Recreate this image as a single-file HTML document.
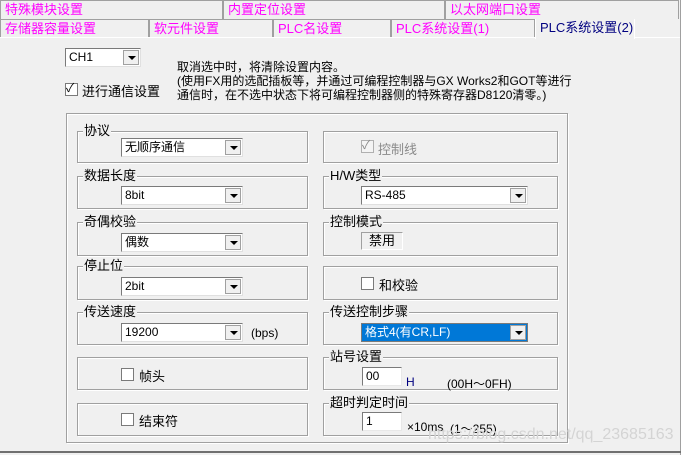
<!DOCTYPE html>
<html><head><meta charset="utf-8"><style>
*{margin:0;padding:0;box-sizing:border-box}
body{width:681px;height:455px;background:#f0f0f0;position:relative;overflow:hidden;font-family:"Liberation Sans","Noto Sans CJK SC",sans-serif;font-size:12px;color:#000}
.a{position:absolute;white-space:nowrap}
.tab{position:absolute;border:1px solid #a0a0a0;border-bottom:none;background:#f0f0f0;color:#ff00ff;font-size:13px;line-height:18px;padding-left:4px}
.g{position:absolute;border:1px solid #a0a0a0;box-shadow:inset 1px 1px 0 #fff,1px 1px 0 #fff}
.gt{position:absolute;top:-9px;left:5px;background:#f0f0f0;padding:0 1px;font-size:13px;line-height:16px}
.cb{position:absolute;height:19px;background:#fff;border:1px solid #7a7a7a;border-right-color:#e0e0e0;border-bottom-color:#e0e0e0;font-size:12px;line-height:17px;padding-left:3px}
.cb .btn{position:absolute;right:1px;top:1px;width:16px;height:15px;background:#f0f0f0;border:1px solid #a0a0a0}
.cb .btn:after{content:"";position:absolute;left:4px;top:5px;border-left:4px solid transparent;border-right:4px solid transparent;border-top:4px solid #000}
.chk{position:absolute;width:13px;height:13px;background:#fff;border:1px solid #7a7a7a}
.ed{position:absolute;background:#fff;border:1px solid #7a7a7a;border-right-color:#e8e8e8;border-bottom-color:#e8e8e8;padding-left:3px;line-height:16px}
</style></head><body>
<div class="tab" style="left:0;top:0;width:223px;height:19px">特殊模块设置</div>
<div class="tab" style="left:223px;top:0;width:222px;height:19px">内置定位设置</div>
<div class="tab" style="left:445px;top:0;width:234px;height:19px">以太网端口设置</div>
<div class="tab" style="left:0;top:19px;width:149px;height:19px">存储器容量设置</div>
<div class="tab" style="left:149px;top:19px;width:124px;height:19px">软元件设置</div>
<div class="tab" style="left:273px;top:19px;width:118px;height:19px">PLC名设置</div>
<div class="tab" style="left:391px;top:19px;width:144px;height:19px">PLC系统设置(1)</div>
<div class="tab" style="left:535px;top:19px;width:100px;height:20px;color:#000080;border-color:#fff;border-top:none">PLC系统设置(2)</div>
<div class="a" style="left:0;top:37px;width:535px;height:1px;background:#fff"></div>
<div class="a" style="left:635px;top:37px;width:45px;height:1px;background:#fff"></div>
<div class="a" style="left:680px;top:0;width:1px;height:455px;background:#a0a0a0"></div>
<div class="a" style="left:0;top:451px;width:681px;height:2px;background:#707070"></div>

<div class="cb" style="left:65px;top:48px;width:76px;height:19px">CH1<div class="btn"></div></div>
<div class="a" style="left:177px;top:60px;line-height:14px">取消选中时，将清除设置内容。<br>(使用FX用的选配插板等，并通过可编程控制器与GX Works2和GOT等进行<br>通信时，在不选中状态下将可编程控制器侧的特殊寄存器D8120清零。)</div>
<div class="chk" style="left:65px;top:83px"></div><div class="a" style="left:66px;top:79px;font-size:12px">✓</div>
<div class="a" style="left:82px;top:81px;font-size:13px">进行通信设置</div>

<div class="g" style="left:66px;top:113px;width:502px;height:330px"></div>

<div class="g" style="left:77px;top:131px;width:231px;height:32px"><span class="gt">协议</span></div>
<div class="cb" style="left:121px;top:138px;width:122px">无顺序通信<div class="btn"></div></div>
<div class="g" style="left:77px;top:176px;width:231px;height:33px"><span class="gt">数据长度</span></div>
<div class="cb" style="left:121px;top:186px;width:122px">8bit<div class="btn"></div></div>
<div class="g" style="left:77px;top:222px;width:231px;height:34px"><span class="gt">奇偶校验</span></div>
<div class="cb" style="left:121px;top:233px;width:122px">偶数<div class="btn"></div></div>
<div class="g" style="left:77px;top:266px;width:231px;height:34px"><span class="gt">停止位</span></div>
<div class="cb" style="left:121px;top:277px;width:122px">2bit<div class="btn"></div></div>
<div class="g" style="left:77px;top:312px;width:231px;height:33px"><span class="gt">传送速度</span></div>
<div class="cb" style="left:121px;top:323px;width:122px">19200<div class="btn"></div></div>
<div class="a" style="left:251px;top:326px">(bps)</div>
<div class="g" style="left:77px;top:357px;width:231px;height:33px"></div>
<div class="chk" style="left:121px;top:368px"></div><div class="a" style="left:139px;top:366px;font-size:13px">帧头</div>
<div class="g" style="left:77px;top:403px;width:231px;height:33px"></div>
<div class="chk" style="left:121px;top:413px"></div><div class="a" style="left:139px;top:411px;font-size:13px">结束符</div>

<div class="g" style="left:323px;top:131px;width:235px;height:32px"></div>
<div class="chk" style="left:361px;top:140px;border-color:#b0b0b0;background:#f4f4f4"></div><div class="a" style="left:362px;top:136px;color:#888">✓</div>
<div class="a" style="left:378px;top:139px;font-size:13px;color:#8a8a8a">控制线</div>
<div class="g" style="left:323px;top:176px;width:235px;height:33px"><span class="gt">H/W类型</span></div>
<div class="cb" style="left:361px;top:186px;width:167px">RS-485<div class="btn"></div></div>
<div class="g" style="left:323px;top:222px;width:235px;height:34px"><span class="gt">控制模式</span></div>
<div class="a" style="left:361px;top:232px;width:42px;height:18px;border:1px solid #a0a0a0;border-right-color:#fff;border-bottom-color:#fff;text-align:center;line-height:15px;font-size:13px">禁用</div>
<div class="g" style="left:323px;top:266px;width:235px;height:34px"></div>
<div class="chk" style="left:361px;top:277px"></div><div class="a" style="left:379px;top:275px;font-size:13px">和校验</div>
<div class="g" style="left:323px;top:312px;width:235px;height:33px"><span class="gt">传送控制步骤</span></div>
<div class="cb" style="left:361px;top:323px;width:167px;background:#0078d7;color:#fff;border-color:#7a7a7a">格式4(有CR,LF)<div class="btn"></div></div>
<div class="g" style="left:323px;top:357px;width:235px;height:33px"><span class="gt">站号设置</span></div>
<div class="ed" style="left:362px;top:367px;width:40px;height:19px">00</div>
<div class="a" style="left:406px;top:375px;color:#000080">H</div>
<div class="a" style="left:447px;top:375px">(00H～0FH)</div>
<div class="g" style="left:323px;top:403px;width:235px;height:33px"><span class="gt">超时判定时间</span></div>
<div class="ed" style="left:362px;top:412px;width:40px;height:19px">1</div>
<div class="a" style="left:407px;top:420px">×10ms</div>
<div class="a" style="left:450px;top:420px">(1～255)</div>
<div class="a" style="left:428px;top:426px;font-size:16px;color:#d4d4d4">https://blog.csdn.net/qq_23685163</div>
</body></html>
